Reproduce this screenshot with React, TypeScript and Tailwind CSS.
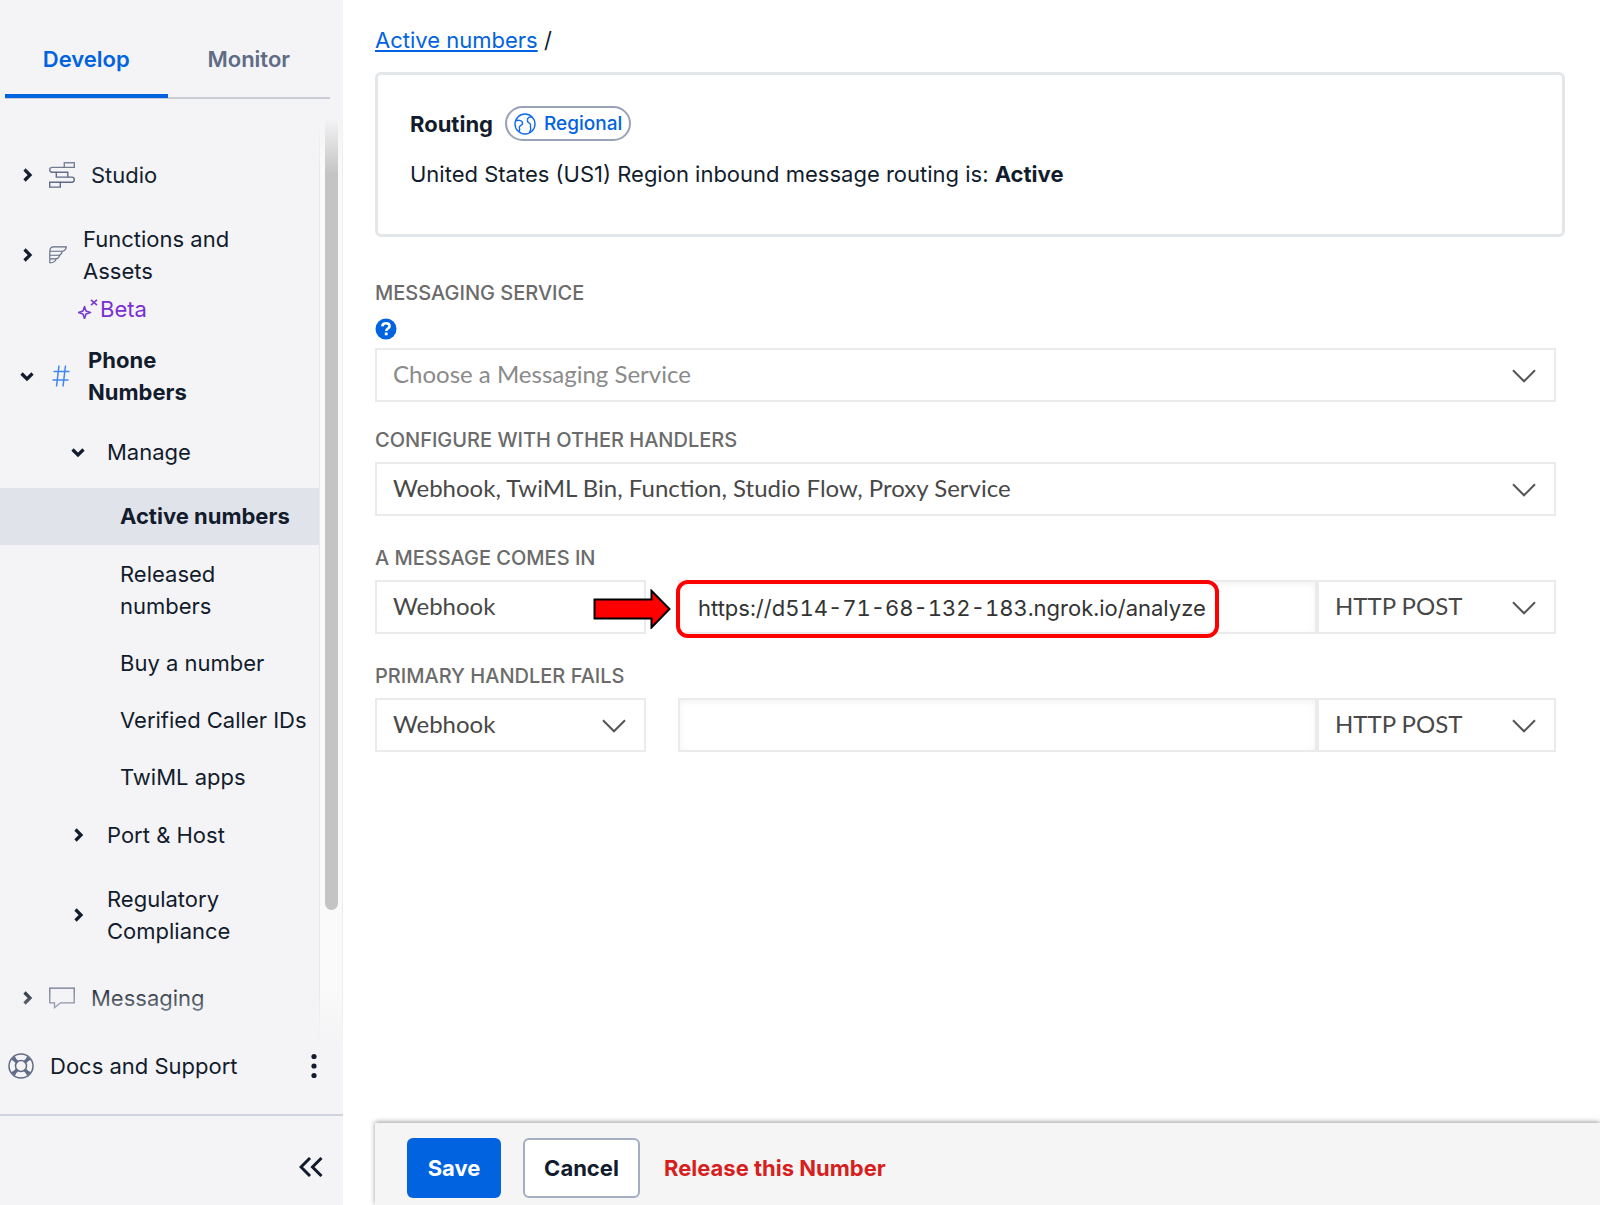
import type { ReactNode } from 'react'
import { clsx } from 'clsx'

const leafItems = [
  { label: 'Active numbers', active: true },
  { label: 'Released numbers', twoLines: true },
  { label: 'Buy a number' },
  { label: 'Verified Caller IDs' },
  { label: 'TwiML apps' },
]

function Caret({ open = false }: { open?: boolean }) {
  return (
    <svg
      viewBox="0 0 14 14"
      className={clsx('size-[14px] shrink-0', open && 'rotate-90')}
      fill="none"
      stroke="currentColor"
      strokeWidth="3.2"
    >
      <path d="M4.5 1.5 10 7l-5.5 5.5" />
    </svg>
  )
}

function StudioIcon() {
  return (
    <svg viewBox="0 0 26 26" className="size-[26px] shrink-0" fill="none" stroke="#606b85" strokeWidth="1.4">
      <path d="M15.3.8h10v4.6h-10zM7.3 10.2h11.5v4.9H7.3zM.7 20.3h10.6v4.8H.7z" />
      <path d="M15.3 5.4H3.2C1.6 5.4.7 6.4.7 7.8s.9 2.4 2.5 2.4h4.1M18.8 15.1h4c1.6 0 2.5 1 2.5 2.5s-.9 2.7-2.5 2.7H11.3" />
    </svg>
  )
}

function FunctionsIcon() {
  return (
    <svg viewBox="0 0 18 18" className="size-[18px] shrink-0" fill="none" stroke="#606b85" strokeWidth="1.1">
      <path d="M4.5.9h12.8c-.3 2.2-1.6 4-4 4.4H.8C.8 2.6 2 .9 4.5.9ZM.8 5.3v11.6M13.3 5.3c-.7 2.6-2 3.9-4 3.9H.8M11 8.7c-1 2.7-2.4 4.2-4.5 4.2H.8M7.5 12.6c-1.2 2.9-3.2 4.3-6.7 4.3" />
    </svg>
  )
}

function HashIcon() {
  return (
    <svg viewBox="0 0 18 22" className="h-[22px] w-[18px] shrink-0" fill="none" stroke="#3f86f0" strokeWidth="1.5">
      <path d="M7 .5 4.5 21.5M13.5.5 11 21.5M1.5 6.500h16M.5 15h16" />
    </svg>
  )
}

function ChatIcon() {
  return (
    <svg viewBox="0 0 26 22" className="h-[22px] w-[26px] shrink-0" fill="none" stroke="#606b85" strokeWidth="1.3">
      <path d="M.8 1.2h24.4v14.6H11.5l-6 4.9v-4.9H.8z" />
    </svg>
  )
}

function SparkIcon() {
  return (
    <svg viewBox="0 0 20 20" className="size-5 shrink-0" fill="none" stroke="#7a3bd1" strokeWidth="1.6">
      <path d="M6.5 7.5 8 12l4.5 1.5L8 15l-1.5 4.5L5 15 .5 13.5 5 12z" strokeLinejoin="round" />
      <path d="m13 .8 6 5.4M19 .8l-6 5.4" />
    </svg>
  )
}

function LifebuoyIcon() {
  return (
    <svg viewBox="0 0 26 26" className="size-[26px] shrink-0" fill="none" stroke="#606b85" strokeWidth="1.5">
      <circle cx="13" cy="13" r="12" />
      <circle cx="13" cy="13" r="5.5" />
      <path d="M6.5 3.5c0 2.5.5 4 2.5 5.7M3.5 6.5c2.5 0 4 .5 5.7 2.5M19.5 3.5c0 2.500-.5 4-2.5 5.7M22.5 6.5c-2.5 0-4 .5-5.7 2.5M6.5 22.5c0-2.5.5-4 2.5-5.7M3.5 19.5c2.5 0 4-.5 5.7-2.5M19.5 22.5c0-2.5-.5-4-2.5-5.7M22.5 19.5c-2.5 0-4-.5-5.7-2.5" />
      <path d="m5 5 4 4M21 5l-4 4M5 21l4-4M21 21l-4-4" strokeWidth="3.4" />
    </svg>
  )
}

function GlobeIcon() {
  return (
    <svg viewBox="0 0 22 22" className="size-[22px] shrink-0" fill="none" stroke="#1068eb" strokeWidth="1.4">
      <circle cx="11" cy="11" r="10" />
      <path d="M1.4 8.2c1.2-1 2.8-1.100 4.2-.8 1.800.3 3 1.300 3 2.900 0 2-1.900 1.900-2.900 3.100-.9 1.200.2 2.300-.1 3.600-.2.800-.7 1.300-1.400 1.700" />
      <path d="M18.200 4.200c-1.600-.6-3.900-.2-4.500 1.600-.6 2 .3 3.900 2 4.500 1 .4 1 1.300.8 2.400-.3 1.700.4 2.500.1 4-.2 1-.7 1.900-1.300 3" />
    </svg>
  )
}

function HelpIcon() {
  return (
    <svg viewBox="0 0 22 22" className="size-[22px]">
      <circle cx="11" cy="11" r="10.5" fill="#0263e0" />
      <path d="M7.300 8.300c.2-2 1.700-3 3.700-3s3.600 1.100 3.600 2.900c0 2.300-3.400 2.300-3.400 4.800" fill="none" stroke="#fff" strokeWidth="2.600" />
      <path d="M9.800 14.500h2.800v2.800H9.800z" fill="#fff" />
    </svg>
  )
}

function ArrowMark() {
  return (
    <svg viewBox="0 0 78 40" className="absolute top-[9px] -right-[25px] h-10 w-[78px]" fill="#f00" stroke="#000" strokeWidth="2">
      <path d="M1.5 10.5h57V1.8L76.5 20 58.5 38.5V29.5h-57z" />
    </svg>
  )
}

type SelectFieldProps = {
  id: string
  value: string
  className?: string
  muted?: boolean
  mark?: ReactNode
}

function SelectField({ id, value, className, muted, mark }: SelectFieldProps) {
  return (
    <div className={clsx('relative', className)}>
      <select
        id={id}
        aria-label={value}
        className={clsx(
          "block h-[54px] w-full appearance-none border-2 border-[#ebebeb] bg-white px-4 pb-0.5 font-['Lato',sans-serif] text-2xl",
          muted ? 'text-[#8a8a8a]' : 'text-[#484848]'
        )}
      >
        <option>{value}</option>
      </select>
      {mark ?? (
        <svg viewBox="0 0 24 14" className="pointer-events-none absolute top-[21px] right-5 h-[14px] w-6" fill="none" stroke="#555" strokeWidth="2">
          <path d="M1 1.2 12 12.3 23 1.2" />
        </svg>
      )}
    </div>
  )
}

function FieldLabel({ id, children }: { id: string; children: string }) {
  return (
    <label htmlFor={id} className="block text-xl leading-6 font-medium text-[#6b6b6b]">
      {children}
    </label>
  )
}

function Sidebar() {
  return (
    <aside className="flex w-[343px] shrink-0 flex-col bg-[#f4f4f6] text-[22px] leading-8">
      <div className="mr-[13px] ml-[5px] flex h-[99px] border-b-2 border-[#cacdd8] font-semibold">
        <button className="-mb-px flex-1 border-b-4 border-[#0263e0] pt-6 text-[#0263e0]">Develop</button>
        <button className="-mb-px flex-1 border-b-4 border-transparent pt-6 text-[#606b85]">Monitor</button>
      </div>

      <div className="relative mt-[19px] flex h-[929px]">
        <nav className="w-80 border-r border-[#e8e8ea] pt-[41px]">
          <a href="#" className="flex items-center pl-5">
            <Caret />
            <span className="ml-[15px]"><StudioIcon /></span>
            <span className="ml-4">Studio</span>
          </a>

          <a href="#" className="mt-8 flex items-center pl-5">
            <Caret />
            <span className="ml-[15px]"><FunctionsIcon /></span>
            <span className="ml-4 w-40">Functions and Assets</span>
          </a>
          <div className="flex items-center pt-1.5 pl-[78px] text-[#7a2fd0]">
            <SparkIcon />
            <span className="ml-0.5">Beta</span>
          </div>

          <a href="#" className="mt-[19px] flex items-center pl-5 font-bold">
            <Caret open />
            <span className="ml-[18px]"><HashIcon /></span>
            <span className="ml-[18px] w-32">Phone Numbers</span>
          </a>

          <a href="#" className="mt-7 flex items-center pl-[71px]">
            <Caret open />
            <span className="ml-[22px]">Manage</span>
          </a>

          <ul className="mt-5">
            {leafItems.map((item) => (
              <li key={item.label}>
                <a
                  href="#"
                  className={clsx(
                    'block pl-[120px]',
                    item.active && 'bg-[#e1e3ea] font-bold',
                    item.twoLines ? 'py-[13px] pr-20' : 'h-[57px] py-3'
                  )}
                >
                  {item.label}
                </a>
              </li>
            ))}
          </ul>

          <a href="#" className="mt-[13px] flex items-center pl-[71px]">
            <Caret />
            <span className="ml-[22px]">Port &amp; Host</span>
          </a>
          <a href="#" className="mt-8 flex items-center pl-[71px]">
            <Caret />
            <span className="ml-[22px] w-32">Regulatory Compliance</span>
          </a>

          <a href="#" className="mt-[35px] flex items-center pl-5">
            <Caret />
            <span className="ml-[15px]"><ChatIcon /></span>
            <span className="ml-4">Messaging</span>
          </a>
        </nav>
        <div className="flex-1 border-r border-[#ececee] bg-[#fafafa] pl-[5px]">
          <div className="h-[792px] w-[13px] rounded-full bg-[#c4c4c4]" />
        </div>
        <div className="pointer-events-none absolute inset-x-0 top-0 h-14 bg-linear-to-b from-[#f4f4f6] to-transparent" />
        <div className="pointer-events-none absolute inset-x-0 bottom-0 h-16 bg-linear-to-t from-[#f4f4f6] to-transparent" />
      </div>

      <div className="flex items-center pt-[3px] pr-[21px] pl-2">
        <LifebuoyIcon />
        <a href="#" className="ml-4">Docs and Support</a>
        <button aria-label="More options" className="ml-auto">
          <svg viewBox="0 0 16 26" className="h-[26px] w-4" fill="#121c2d">
            <circle cx="8" cy="3.5" r="2.6" />
            <circle cx="8" cy="13" r="2.6" />
            <circle cx="8" cy="22.5" r="2.6" />
          </svg>
        </button>
      </div>

      <div className="mt-8 flex flex-1 items-center justify-end border-t-2 border-[#ced2dc] pt-3 pr-5">
        <button aria-label="Collapse sidebar">
          <svg viewBox="0 0 24 20" className="h-5 w-6" fill="none" stroke="#121c2d" strokeWidth="3">
            <path d="M11 1 2 10l9 9M22.5 1l-9 9 9 9" />
          </svg>
        </button>
      </div>
    </aside>
  )
}

export default function App() {
  return (
    <div className="flex min-h-screen bg-white font-['Inter',sans-serif] text-[#121c2d]">
      <Sidebar />

      <main className="flex min-w-0 flex-1 flex-col pl-8">
        <div className="pt-6 text-[22px] leading-8">
          <a href="#" className="text-[#0263e0] underline">Active numbers</a> /
        </div>

        <section className="mt-4 mr-[35px] h-[165px] rounded-md border-3 border-[#e4e7ea] px-8 pt-[31px] text-[22px] leading-8">
          <div className="flex items-center">
            <h2 className="font-bold">Routing</h2>
            <span className="ml-3 flex h-[35px] items-center gap-2 rounded-full border-2 border-[#9aa2b8] px-[7px] text-[19px] font-medium text-[#0263e0]">
              <GlobeIcon />
              Regional
            </span>
          </div>
          <p className="mt-[17px]">
            United States (US1) Region inbound message routing is: <strong className="font-bold">Active</strong>
          </p>
        </section>

        <form className="mt-11 mr-11">
          <FieldLabel id="service">MESSAGING SERVICE</FieldLabel>
          <button type="button" aria-label="Help" className="mt-[13px] block">
            <HelpIcon />
          </button>
          <SelectField id="service" value="Choose a Messaging Service" className="mt-2" muted />

          <div className="mt-[26px]">
            <FieldLabel id="handlers">CONFIGURE WITH OTHER HANDLERS</FieldLabel>
          </div>
          <SelectField id="handlers" value="Webhook, TwiML Bin, Function, Studio Flow, Proxy Service" className="mt-[10px]" />

          <div className="mt-[30px]">
            <FieldLabel id="incoming">A MESSAGE COMES IN</FieldLabel>
          </div>
          <div className="mt-[10px] flex">
            <SelectField id="incoming" value="Webhook" className="z-10 w-[271px]" mark={<ArrowMark />} />
            <div className="relative ml-8 flex-1">
              <input
                aria-label="Incoming message URL"
                defaultValue="https://d514-71-68-132-183.ngrok.io/analyze"
                className="h-[54px] w-full border-2 border-[#ebebeb] px-[18px] pt-0.5 text-[22px] text-[#333] tabular-nums shadow-[inset_0_2px_6px_#0000000d]"
              />
              <div className="pointer-events-none absolute top-0 -left-0.5 h-[58px] w-[543px] rounded-xl border-4 border-[#f00]" />
            </div>
            <SelectField id="incoming-method" value="HTTP POST" className="w-[239px]" />
          </div>

          <div className="mt-[30px]">
            <FieldLabel id="fallback">PRIMARY HANDLER FAILS</FieldLabel>
          </div>
          <div className="mt-[10px] flex">
            <SelectField id="fallback" value="Webhook" className="w-[271px]" />
            <input
              aria-label="Fallback URL"
              className="ml-8 h-[54px] min-w-0 flex-1 border-2 border-[#ebebeb] px-[18px] text-[22px] text-[#333] shadow-[inset_0_2px_6px_#0000000d]"
            />
            <SelectField id="fallback-method" value="HTTP POST" className="w-[239px]" />
          </div>
        </form>

        <footer className="mt-auto flex h-[82px] items-center bg-[#f5f5f5] px-8 pt-2 text-[22px] font-bold shadow-[0_-1px_5px_#00000066]">
          <button className="h-[60px] w-[94px] rounded-md bg-[#0263e0] text-white">Save</button>
          <button className="ml-[22px] h-[60px] w-[117px] rounded-md border-2 border-[#a5adc2] bg-white">Cancel</button>
          <button className="ml-6 text-[#d61f1f]">Release this Number</button>
        </footer>
      </main>
    </div>
  )
}
